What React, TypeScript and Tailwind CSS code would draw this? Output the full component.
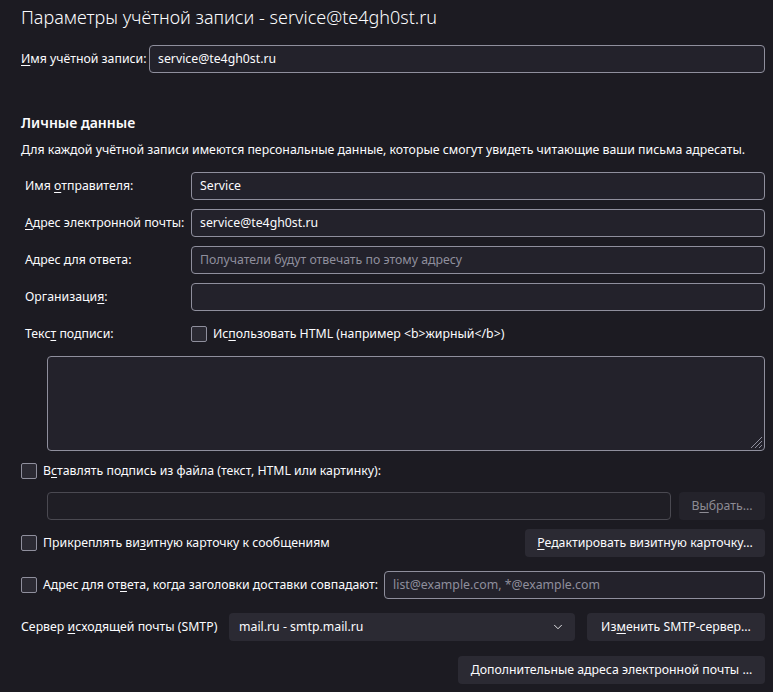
import { ChevronDown } from "lucide-react";
import type { ReactNode } from "react";

const font = { fontFamily: '"Noto Sans", "Open Sans", sans-serif' };

function Key({ children }: { children: ReactNode }) {
  return <span className="underline underline-offset-2">{children}</span>;
}

function TextBox({ value, placeholder, className = "" }: { value?: string; placeholder?: string; className?: string }) {
  return (
    <div
      className={`flex h-[28px] items-center rounded-[4px] border border-[#8f8f9d] bg-[#23222b] px-[8px] text-[12.3px] whitespace-nowrap ${className}`}
    >
      {value ? <span className="text-[#fbfbfe]">{value}</span> : <span className="text-[#8f8f9d]">{placeholder}</span>}
    </div>
  );
}

function Check({ children }: { children: ReactNode }) {
  return (
    <label className="flex items-center gap-[6px] text-[12.3px] whitespace-nowrap">
      <span className="h-[16px] w-[16px] shrink-0 rounded-[2px] border border-[#8f8f9d] bg-[#2b2a33]" />
      <span>{children}</span>
    </label>
  );
}

function Button({ children, className = "", disabled }: { children: ReactNode; className?: string; disabled?: boolean }) {
  return (
    <button
      type="button"
      className={`flex h-[28px] items-center justify-center rounded-[4px] px-[12px] text-[12.3px] whitespace-nowrap ${
        disabled ? "bg-[#24232b] text-[#8d8c94]" : "bg-[#2b2a33] text-[#fbfbfe]"
      } ${className}`}
    >
      <span>{children}</span>
    </button>
  );
}

function Row({ label, children }: { label: ReactNode; children: ReactNode }) {
  return (
    <div className="flex h-[28px] items-center">
      <div className="w-[170px] shrink-0 pl-[4px] text-[12.3px] whitespace-nowrap">{label}</div>
      {children}
    </div>
  );
}

export default function App() {
  return (
    <div style={font} className="h-[692px] w-[773px] overflow-hidden bg-[#1c1b22] pl-[21px] pr-[8px] text-[#fbfbfe]">
      <h1 className="pt-[3px] text-[18px] leading-[28px] font-light whitespace-nowrap">
        Параметры учётной записи - service@te4gh0st.ru
      </h1>

      <div className="mt-[14px] flex h-[28px] items-center">
        <div className="w-[128px] shrink-0 text-[12.3px] whitespace-nowrap">
          <Key>И</Key>мя учётной записи:
        </div>
        <TextBox value="service@te4gh0st.ru" className="flex-1" />
      </div>

      <h2 className="mt-[40px] text-[14px] leading-[20px] font-semibold">Личные данные</h2>
      <p className="mt-[7px] text-[12.3px] leading-[20px] whitespace-nowrap">
        Для каждой учётной записи имеются персональные данные, которые смогут увидеть читающие ваши письма адресаты.
      </p>

      <div className="mt-[12px] flex flex-col gap-[9px]">
        <Row
          label={
            <>
              Имя <Key>о</Key>тправителя:
            </>
          }
        >
          <TextBox value="Service" className="flex-1" />
        </Row>
        <Row
          label={
            <>
              <Key>А</Key>дрес электронной почты:
            </>
          }
        >
          <TextBox value="service@te4gh0st.ru" className="flex-1" />
        </Row>
        <Row label="Адрес для ответа:">
          <TextBox placeholder="Получатели будут отвечать по этому адресу" className="flex-1" />
        </Row>
        <Row
          label={
            <>
              Организаци<Key>я</Key>:
            </>
          }
        >
          <TextBox className="flex-1" />
        </Row>
        <Row
          label={
            <>
              Текс<Key>т</Key> подписи:
            </>
          }
        >
          <Check>
            Ис<Key>п</Key>ользовать HTML (например &lt;b&gt;жирный&lt;/b&gt;)
          </Check>
        </Row>
      </div>

      <div className="relative mt-[8px] ml-[26px] h-[95px] rounded-[4px] border border-[#8f8f9d] bg-[#23222b]">
        <svg className="absolute right-[1px] bottom-[1px]" width="14" height="14" viewBox="0 0 14 14">
          <path d="M13 2L2 13M13 6L6 13M13 10L10 13" stroke="#8f8f9d" strokeWidth="1" />
        </svg>
      </div>

      <div className="mt-[8px] flex h-[24px] items-center">
        <Check>
          В<Key>с</Key>тавлять подпись из файла (текст, HTML или картинку):
        </Check>
      </div>

      <div className="mt-[9px] ml-[26px] flex gap-[8px]">
        <div className="h-[28px] flex-1 rounded-[4px] border border-[#4a4951] bg-[#1f1e25]" />
        <Button disabled className="w-[86px]">
          В<Key>ы</Key>брать...
        </Button>
      </div>

      <div className="mt-[9px] flex items-center justify-between">
        <Check>
          Прикреплять ви<Key>з</Key>итную карточку к сообщениям
        </Check>
        <Button className="w-[240px]">
          <Key>Р</Key>едактировать визитную карточку...
        </Button>
      </div>

      <div className="mt-[14px] flex items-center gap-[6px]">
        <Check>
          Адрес для от<Key>в</Key>ета, когда заголовки доставки совпадают:
        </Check>
        <TextBox placeholder="list@example.com, *@example.com" className="flex-1" />
      </div>

      <div className="mt-[14px] flex items-center">
        <div className="w-[208px] shrink-0 text-[12.3px] whitespace-nowrap">
          Сервер <Key>и</Key>сходящей почты (SMTP)
        </div>
        <div className="flex h-[28px] w-[346px] items-center justify-between rounded-[4px] bg-[#2b2a33] pr-[10px] pl-[10px] text-[12.3px]">
          <span>mail.ru - smtp.mail.ru</span>
          <ChevronDown className="h-[14px] w-[14px] text-[#fbfbfe]" strokeWidth={1.5} />
        </div>
        <Button className="ml-[12px] flex-1">
          Из<Key>м</Key>енить SMTP-сервер...
        </Button>
      </div>

      <div className="mt-[15px] flex justify-end">
        <Button className="w-[307px]">Дополнительные адреса электронной почты ...</Button>
      </div>
    </div>
  );
}
